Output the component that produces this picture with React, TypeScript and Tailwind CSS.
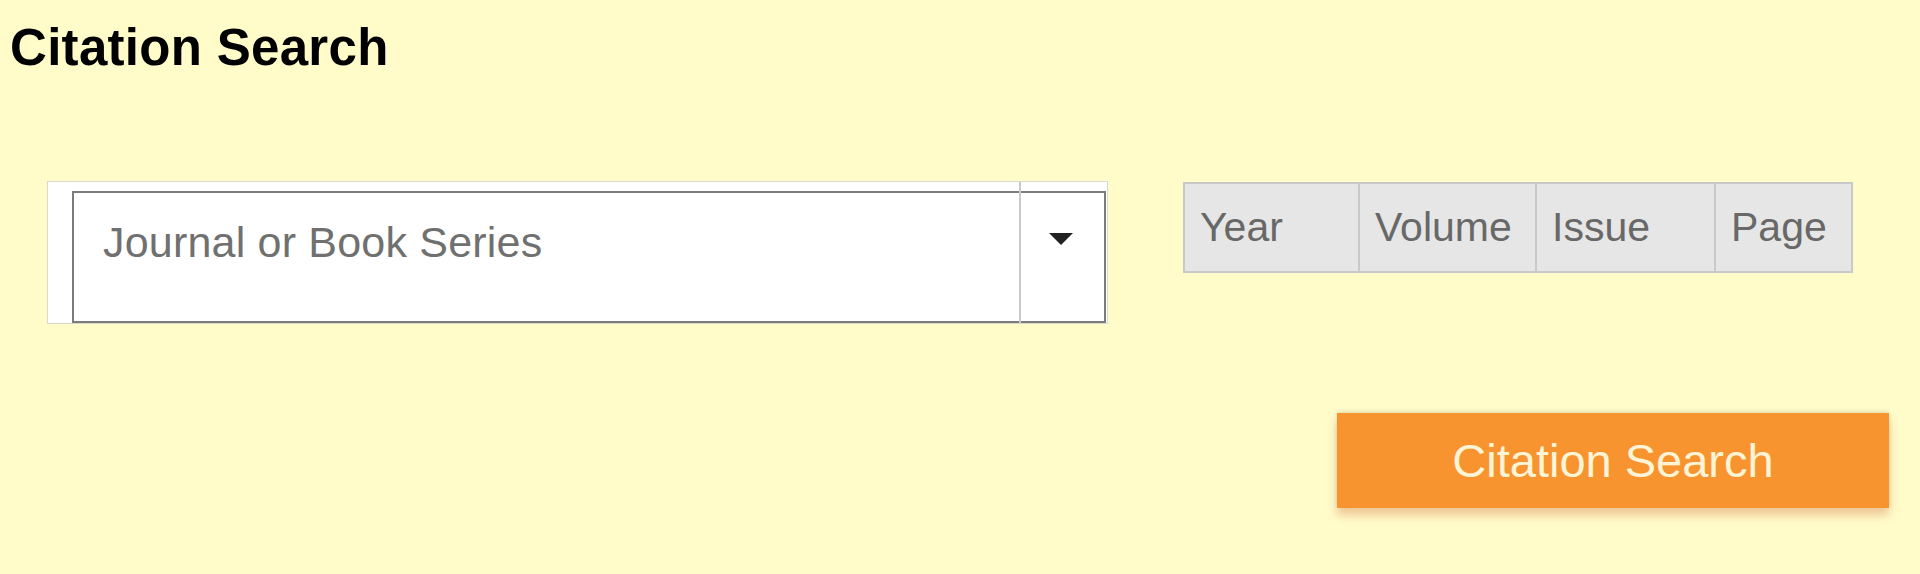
import React from 'react';

const FIELDS = [
    { id: 'year', label: 'Year', width: 'w-[173px]' },
    { id: 'volume', label: 'Volume', width: 'w-[177px]' },
    { id: 'issue', label: 'Issue', width: 'w-[179px]' },
    { id: 'page', label: 'Page', width: 'w-[137px]' },
];

const App = () => {
    return (
        <div className="w-[1920px] h-[574px] bg-[#fffcca] font-['Liberation_Sans',Arial,sans-serif] overflow-hidden">
            {/* Title */}
            <h2 className="pl-[10px] pt-[22px] text-[51px] leading-none font-bold text-black tracking-[0.3px]">
                Citation Search
            </h2>

            <div className="flex items-start mt-[108px]">
                {/* Journal select */}
                <div className="relative ml-[47px] w-[1061px] h-[143px] bg-white border border-[#d9d9cf] pl-[24px] pt-[9px] pr-[1px]">
                    <div className="flex h-[132px] border-2 border-[#7b7b7b]">
                        <div className="flex-1 pl-[29px] pt-[28px] text-[43px] leading-none tracking-[0.2px] text-[#707070]">
                            Journal or Book Series
                        </div>
                        <div className="w-[86px] flex justify-center pt-[40px]">
                            <svg width="24" height="12" viewBox="0 0 24 12">
                                <polygon points="0,0 24,0 12,12" fill="#222" />
                            </svg>
                        </div>
                    </div>
                    {/* divider */}
                    <div className="absolute top-0 bottom-0 right-[86px] w-[2px] bg-[#c9c9c9]"></div>
                </div>

                {/* Year / Volume / Issue / Page */}
                <div className="flex ml-[75px] mt-[1px] h-[91px] border-2 border-[#c9c9c9] bg-[#e6e6e6]">
                    {FIELDS.map((f, i) => (
                        <div
                            key={f.id}
                            className={`${f.width} flex items-center pl-[15px] text-[41px] leading-none text-[#686868] ${i > 0 ? 'border-l-2 border-[#c9c9c9]' : ''}`}
                        >
                            {f.label}
                        </div>
                    ))}
                </div>
            </div>

            {/* Submit */}
            <div className="flex justify-end mt-[89px] pr-[31px]">
                <button className="w-[552px] h-[95px] bg-[#f8942f] text-[#fff4d6] text-[47px] leading-none shadow-[0_7px_9px_rgba(215,120,70,0.4),0_-2px_4px_rgba(0,0,0,0.1)]">
                    Citation Search
                </button>
            </div>
        </div>
    );
};

export default App;
